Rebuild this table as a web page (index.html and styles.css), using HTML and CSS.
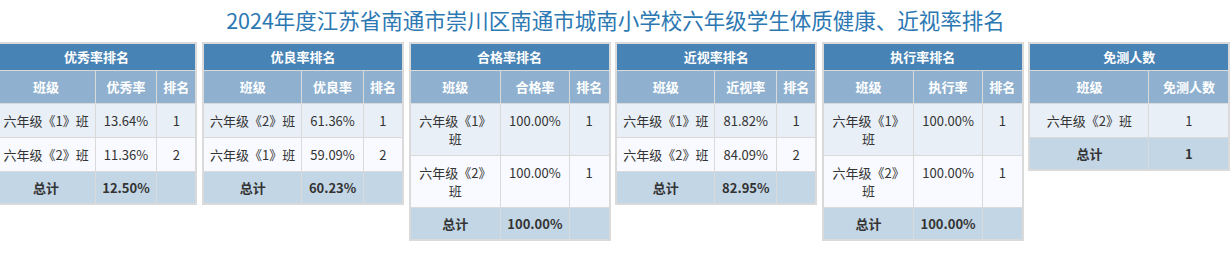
FILE: index.html
```html
<!DOCTYPE html>
<html lang="zh-CN">
<head>
<meta charset="utf-8">
<title>体质健康排名</title>
<link rel="stylesheet" href="styles.css">
</head>
<body>
<h1 class="title">2024年度江苏省南通市崇川区南通市城南小学校六年级学生体质健康、近视率排名</h1>
<div class="boards">
  <table class="rank">
    <colgroup><col class="c-a"><col class="c-b"><col class="c-c"></colgroup>
    <thead>
      <tr><th colspan="3" class="cap">优秀率排名</th></tr>
      <tr class="head"><th>班级</th><th>优秀率</th><th>排名</th></tr>
    </thead>
    <tbody>
      <tr class="odd"><td>六年级《1》班</td><td>13.64%</td><td>1</td></tr>
      <tr class="even"><td>六年级《2》班</td><td>11.36%</td><td>2</td></tr>
      <tr class="total"><td>总计</td><td>12.50%</td><td></td></tr>
    </tbody>
  </table>
  <table class="rank">
    <colgroup><col class="c-a"><col class="c-b"><col class="c-c"></colgroup>
    <thead>
      <tr><th colspan="3" class="cap">优良率排名</th></tr>
      <tr class="head"><th>班级</th><th>优良率</th><th>排名</th></tr>
    </thead>
    <tbody>
      <tr class="odd"><td>六年级《2》班</td><td>61.36%</td><td>1</td></tr>
      <tr class="even"><td>六年级《1》班</td><td>59.09%</td><td>2</td></tr>
      <tr class="total"><td>总计</td><td>60.23%</td><td></td></tr>
    </tbody>
  </table>
  <table class="rank">
    <colgroup><col class="w-a"><col class="w-b"><col class="w-c"></colgroup>
    <thead>
      <tr><th colspan="3" class="cap">合格率排名</th></tr>
      <tr class="head"><th>班级</th><th>合格率</th><th>排名</th></tr>
    </thead>
    <tbody>
      <tr class="odd"><td>六年级《1》班</td><td>100.00%</td><td>1</td></tr>
      <tr class="even"><td>六年级《2》班</td><td>100.00%</td><td>1</td></tr>
      <tr class="total"><td>总计</td><td>100.00%</td><td></td></tr>
    </tbody>
  </table>
  <table class="rank">
    <colgroup><col class="c-a"><col class="c-b"><col class="c-c"></colgroup>
    <thead>
      <tr><th colspan="3" class="cap">近视率排名</th></tr>
      <tr class="head"><th>班级</th><th>近视率</th><th>排名</th></tr>
    </thead>
    <tbody>
      <tr class="odd"><td>六年级《1》班</td><td>81.82%</td><td>1</td></tr>
      <tr class="even"><td>六年级《2》班</td><td>84.09%</td><td>2</td></tr>
      <tr class="total"><td>总计</td><td>82.95%</td><td></td></tr>
    </tbody>
  </table>
  <table class="rank">
    <colgroup><col class="w-a"><col class="w-b"><col class="w-c"></colgroup>
    <thead>
      <tr><th colspan="3" class="cap">执行率排名</th></tr>
      <tr class="head"><th>班级</th><th>执行率</th><th>排名</th></tr>
    </thead>
    <tbody>
      <tr class="odd"><td>六年级《1》班</td><td>100.00%</td><td>1</td></tr>
      <tr class="even"><td>六年级《2》班</td><td>100.00%</td><td>1</td></tr>
      <tr class="total"><td>总计</td><td>100.00%</td><td></td></tr>
    </tbody>
  </table>
  <table class="rank">
    <colgroup><col class="e-a"><col class="e-b"></colgroup>
    <thead>
      <tr><th colspan="2" class="cap">免测人数</th></tr>
      <tr class="head"><th>班级</th><th>免测人数</th></tr>
    </thead>
    <tbody>
      <tr class="odd"><td>六年级《2》班</td><td>1</td></tr>
      <tr class="total"><td>总计</td><td>1</td></tr>
    </tbody>
  </table>
</div>
</body>
</html>
```
FILE: styles.css
```css
html, body {
  margin: 0;
  padding: 0;
  background: #ffffff;
}
body {
  font-family: "Noto Sans CJK SC", "Noto Sans", sans-serif;
  color: #333333;
}
.title {
  margin: 0;
  padding-top: 5px;
  font-size: 21.5px;
  line-height: 30px;
  font-weight: normal;
  text-align: center;
  color: #2c78b3;
}
.boards {
  display: flex;
  align-items: flex-start;
  gap: 4.6px;
  margin-top: 7px;
  margin-left: -4.6px;
}
.rank {
  flex: none;
  width: 202px;
  table-layout: fixed;
  border-collapse: collapse;
  border: 2px solid #dadada;
  font-size: 13px;
  line-height: 18px;
}
.c-a { width: 49.4%; }
.c-b { width: 30.8%; }
.c-c { width: 19.8%; }
.w-a { width: 45.5%; }
.w-b { width: 34.3%; }
.w-c { width: 20.2%; }
.e-a { width: 59.8%; }
.e-b { width: 40.2%; }
.rank th,
.rank td {
  border: 1px solid #dadada;
  text-align: center;
  vertical-align: top;
}
.rank th.cap {
  background: #4783b5;
  color: #ffffff;
  font-weight: bold;
  padding: 4px 2px;
}
.rank .head th {
  background: #8fb1cf;
  color: #ffffff;
  font-weight: bold;
  padding: 7px 2px;
}
.rank td {
  padding: 8px 4px 7px;
}
.odd td { background: #e8eff7; }
.even td { background: #f8faff; }
.total td {
  background: #c3d6e5;
  font-weight: bold;
  padding: 7px 4px 6px;
}
```
